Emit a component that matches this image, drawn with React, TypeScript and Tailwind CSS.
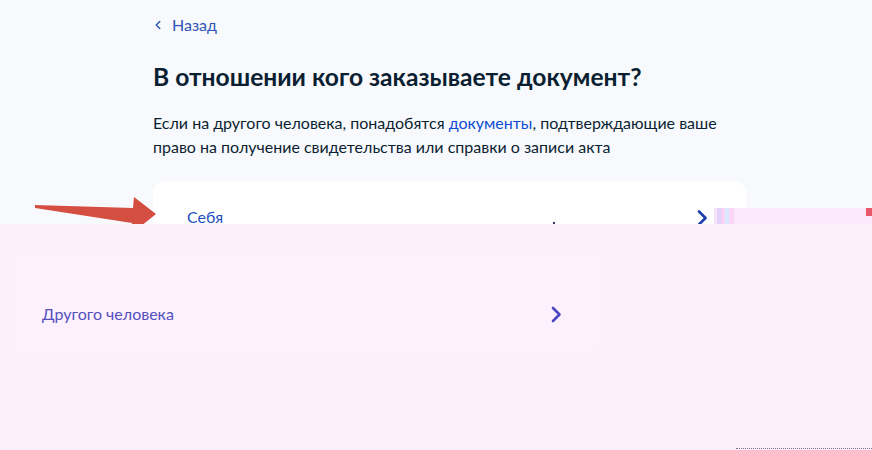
import { ChevronLeft } from "lucide-react";

function Chevron({ className }: { className?: string }) {
  return (
    <svg className={className} viewBox="0 0 11 16" fill="none">
      <path d="M2 1.5 8.5 8 2 14.5" stroke="currentColor" strokeWidth="2.6" strokeLinecap="round" strokeLinejoin="round" />
    </svg>
  );
}

export default function App() {
  return (
    <div className="relative flex h-[450px] w-[872px] flex-col overflow-hidden bg-[#fdf0fd] font-['Lato',_'Noto_Sans',_sans-serif] text-[#0b1f33]">
      {/* top part of the page */}
      <div className="relative h-[224px] shrink-0 overflow-hidden bg-[#f8f9fc]">
        <div className="ml-[153px] w-[593px] pt-[13px]">
          <a className="flex h-6 items-center gap-[7px] text-[16px] text-[#2d54b6]">
            <ChevronLeft className="h-[14px] w-[14px] -ml-[2px]" strokeWidth={2.5} />
            <span>Назад</span>
          </a>
          <h1 className="mt-[24px] text-[24.6px] font-bold leading-8 text-[#0b1f33]">
            В отношении кого заказываете документ?
          </h1>
          <p className="mt-[18px] text-[16px] leading-6">
            Если на другого человека, понадобятся <span className="text-[#0d4cd3]">документы</span>, подтверждающие ваше право на получение свидетельства или справки о записи акта
          </p>
          <div className="mt-[22px] flex h-[72px] items-center justify-between rounded-xl bg-white pl-[34px] pr-[38px]">
            <span className="text-[16px] text-[#1d4fbf]">Себя</span>
            <Chevron className="mt-[1px] h-[16px] w-[11px] text-[#1d3fae]" />
          </div>
        </div>

        {/* red pointer arrow */}
        <svg className="absolute left-0 top-0" width="200" height="224" viewBox="0 0 200 224">
          <polygon
            points="35,205 133,208 134,197 156,214 131,234 132,223 35,208"
            fill="#d54e42"
          />
        </svg>

        {/* broken strip on the right */}
        <div className="absolute left-[714px] top-[208px] flex h-[16px] w-[158px] bg-[#fce8fb]">
          <div className="h-full w-[3px] bg-[#f7e3fb]" />
          <div className="h-full w-[5px] bg-[#e6d2f8]" />
          <div className="h-full w-[3px] bg-[#fbd1f5]" />
          <div className="h-full w-[4px] bg-[#d9e9ff]" />
          <div className="h-full w-[5px] bg-[#fbd6f6]" />
          <div className="flex-1" />
          <div className="h-[8px] w-[6px] self-start bg-[#e8586c]" />
        </div>
        <div className="absolute left-[553px] top-[222px] h-[2px] w-[2px] bg-[#3b3566]" />
      </div>

      {/* bottom part */}
      <div className="relative flex-1 pt-[31px]">
        <div className="ml-[10px] flex h-[96px] w-[590px] items-center justify-between rounded-lg bg-[#fdf1fe] pl-[32px] pr-[38px] pt-[22px]">
          <span className="text-[16px] text-[#5450bd]">Другого человека</span>
          <Chevron className="h-[17px] w-[11px] text-[#4a45c0]" />
        </div>
        <div className="absolute bottom-[1px] left-[736px] w-[136px] border-b border-dotted border-[#8a6b8e]" />
      </div>
    </div>
  );
}
